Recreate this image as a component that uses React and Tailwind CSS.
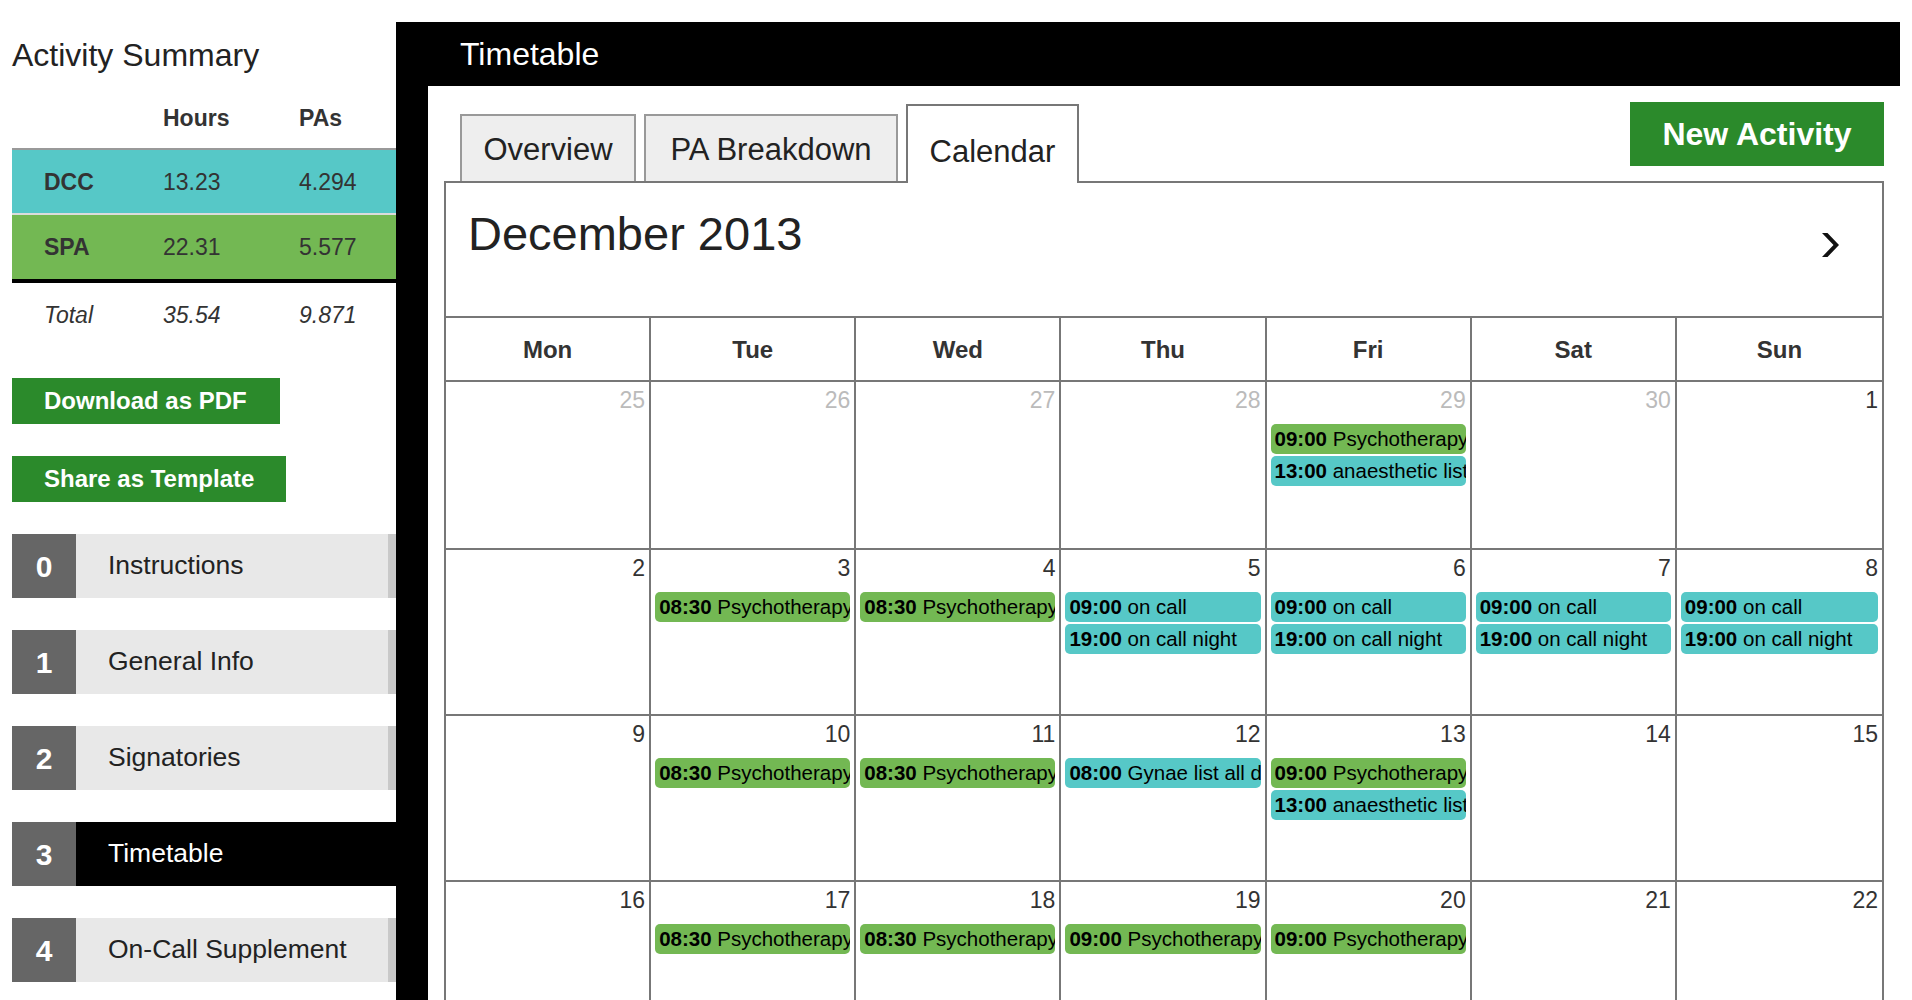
import React from 'react';

const GREEN = 'bg-[#73b853]';
const TEAL = 'bg-[#56c8c7]';

const psy = (t) => ({ t, name: 'Psychotherapy', c: GREEN });
const anaes = { t: '13:00', name: 'anaesthetic list', c: TEAL };
const onCall = { t: '09:00', name: 'on call', c: TEAL };
const onNight = { t: '19:00', name: 'on call night', c: TEAL };
const gynae = { t: '08:00', name: 'Gynae list all day', c: TEAL };

const weeks = [
  [
    { d: 25, o: true },
    { d: 26, o: true },
    { d: 27, o: true },
    { d: 28, o: true },
    { d: 29, o: true, ev: [psy('09:00'), anaes] },
    { d: 30, o: true },
    { d: 1 },
  ],
  [
    { d: 2 },
    { d: 3, ev: [psy('08:30')] },
    { d: 4, ev: [psy('08:30')] },
    { d: 5, ev: [onCall, onNight] },
    { d: 6, ev: [onCall, onNight] },
    { d: 7, ev: [onCall, onNight] },
    { d: 8, ev: [onCall, onNight] },
  ],
  [
    { d: 9 },
    { d: 10, ev: [psy('08:30')] },
    { d: 11, ev: [psy('08:30')] },
    { d: 12, ev: [gynae] },
    { d: 13, ev: [psy('09:00'), anaes] },
    { d: 14 },
    { d: 15 },
  ],
  [
    { d: 16 },
    { d: 17, ev: [psy('08:30')] },
    { d: 18, ev: [psy('08:30')] },
    { d: 19, ev: [psy('09:00')] },
    { d: 20, ev: [psy('09:00')] },
    { d: 21 },
    { d: 22 },
  ],
  [
    { d: 23 },
    { d: 24 },
    { d: 25 },
    { d: 26 },
    { d: 27 },
    { d: 28 },
    { d: 29 },
  ],
];

const days = ['Mon', 'Tue', 'Wed', 'Thu', 'Fri', 'Sat', 'Sun'];

const nav = [
  { n: 0, label: 'Instructions' },
  { n: 1, label: 'General Info' },
  { n: 2, label: 'Signatories' },
  { n: 3, label: 'Timetable', active: true },
  { n: 4, label: 'On-Call Supplement' },
];

function Sidebar() {
  return (
    <aside className="w-[396px] shrink-0 pl-[12px] pt-[37px] text-[#333]">
      <h2 className="text-[32px] leading-[36px] text-[#222]">Activity Summary</h2>

      {/* Summary table */}
      <div className="mt-[23px] text-[23px] leading-[26px]">
        <div className="grid h-[54px] grid-cols-[151px_136px_1fr] border-b-2 border-[#999] pt-[9px] font-bold">
          <div />
          <div>Hours</div>
          <div>PAs</div>
        </div>
        <div className={`grid h-[65px] grid-cols-[151px_136px_1fr] items-center border-b-2 border-[#dcdcdc] ${TEAL}`}>
          <div className="pl-8 font-bold">DCC</div>
          <div>13.23</div>
          <div>4.294</div>
        </div>
        <div className={`grid h-[68px] grid-cols-[151px_136px_1fr] items-center border-b-4 border-black ${GREEN}`}>
          <div className="pl-8 font-bold">SPA</div>
          <div>22.31</div>
          <div>5.577</div>
        </div>
        <div className="grid h-[56px] grid-cols-[151px_136px_1fr] pt-[19px] italic">
          <div className="pl-8">Total</div>
          <div>35.54</div>
          <div>9.871</div>
        </div>
      </div>

      <button className="mt-[39px] flex h-[46px] w-[268px] items-center bg-[#2b8a2b] pl-8 text-[24px] font-bold text-white">
        Download as PDF
      </button>
      <button className="mt-[32px] flex h-[46px] w-[274px] items-center bg-[#2b8a2b] pl-8 text-[24px] font-bold text-white">
        Share as Template
      </button>

      {/* Steps */}
      <nav className="mt-[32px] flex flex-col gap-[32px]">
        {nav.map((item) => (
          <div key={item.n} className="flex h-[64px]">
            <div className="flex w-[64px] items-center justify-center bg-[#666] text-[30px] font-bold text-white">
              {item.n}
            </div>
            {item.active ? (
              <div className="flex flex-1 items-center bg-black pl-8 text-[26.5px] text-white">{item.label}</div>
            ) : (
              <div className="flex flex-1 items-center border-r-8 border-[#c9c9c9] bg-[#e8e8e8] pl-8 text-[26.5px] text-[#222]">
                {item.label}
              </div>
            )}
          </div>
        ))}
      </nav>
    </aside>
  );
}

function Event({ ev }) {
  return (
    <div className={`h-[30px] overflow-hidden whitespace-nowrap rounded-[5px] pl-[4px] pr-[2px] text-[20.5px] leading-[30px] text-black ${ev.c}`}>
      <span className="font-bold">{ev.t}</span> {ev.name}
    </div>
  );
}

function Calendar() {
  return (
    <div className="border-2 border-[#777] bg-white">
      {/* Month header */}
      <div className="flex h-[135px] items-start justify-between border-b-2 border-[#777]">
        <h1 className="pl-[22px] pt-[24px] text-[47px] leading-[53px] text-[#222]">December 2013</h1>
        <svg className="mr-[42px] mt-[50px]" width="19" height="24" viewBox="0 0 19 24">
          <path d="M1 0h5.5l11.5 12-11.5 12H1l11.5-12z" fill="#111" />
        </svg>
      </div>

      {/* Day names */}
      <div className="grid h-[64px] grid-cols-7 border-b-2 border-[#777]">
        {days.map((d, i) => (
          <div
            key={d}
            className={`flex items-center justify-center pt-[2px] text-[24px] font-bold text-[#333] ${i < 6 ? 'border-r-2 border-[#777]' : ''}`}
          >
            {d}
          </div>
        ))}
      </div>

      {/* Weeks */}
      {weeks.map((week, wi) => (
        <div key={wi} className={`grid grid-cols-7 border-b-2 border-[#777] ${wi === 0 ? 'h-[168px]' : 'h-[166px]'}`}>
          {week.map((cell, i) => (
            <div key={i} className={`min-w-0 px-[4px] pt-[5px] ${i < 6 ? 'border-r-2 border-[#777]' : ''}`}>
              <div className={`text-right text-[23px] leading-[26px] ${cell.o ? 'text-[#bbb]' : 'text-[#333]'}`}>
                {cell.d}
              </div>
              {cell.ev && (
                <div className="mt-[11px] flex flex-col gap-[2px]">
                  {cell.ev.map((ev, k) => (
                    <Event key={k} ev={ev} />
                  ))}
                </div>
              )}
            </div>
          ))}
        </div>
      ))}
    </div>
  );
}

export default function App() {
  return (
    <div className="flex min-h-screen bg-white [font-family:'Liberation_Sans',Arial,sans-serif]">
      <Sidebar />

      <main className="mr-[12px] mt-[22px] flex min-w-0 flex-1 flex-col bg-black">
        <header className="flex h-[64px] items-center pl-[64px] text-[32px] text-white">Timetable</header>

        <div className="ml-[32px] flex-1 bg-white px-[16px] pb-8 pt-[18px]">
          {/* Tabs + action */}
          <div className="-mb-[2px] flex h-[79px] items-end justify-between">
            <div className="flex items-end gap-[8px] pl-[16px]">
              <div className="mb-[2px] h-[67px] w-[176px] border-2 border-b-0 border-[#999] bg-[#eee] pt-[11px] text-center text-[31px] text-[#222]">
                Overview
              </div>
              <div className="mb-[2px] h-[67px] w-[254px] border-2 border-b-0 border-[#999] bg-[#eee] pt-[11px] text-center text-[31px] text-[#222]">
                PA Breakdown
              </div>
              <div className="relative z-10 h-[79px] w-[173px] border-2 border-b-0 border-[#777] bg-white pt-[23px] text-center text-[31px] text-[#222]">
                Calendar
              </div>
            </div>
            <button className="-mt-[2px] h-[64px] w-[254px] self-start bg-[#2b8a2b] text-[32px] font-bold text-white">
              New Activity
            </button>
          </div>

          <Calendar />
        </div>
      </main>
    </div>
  );
}
